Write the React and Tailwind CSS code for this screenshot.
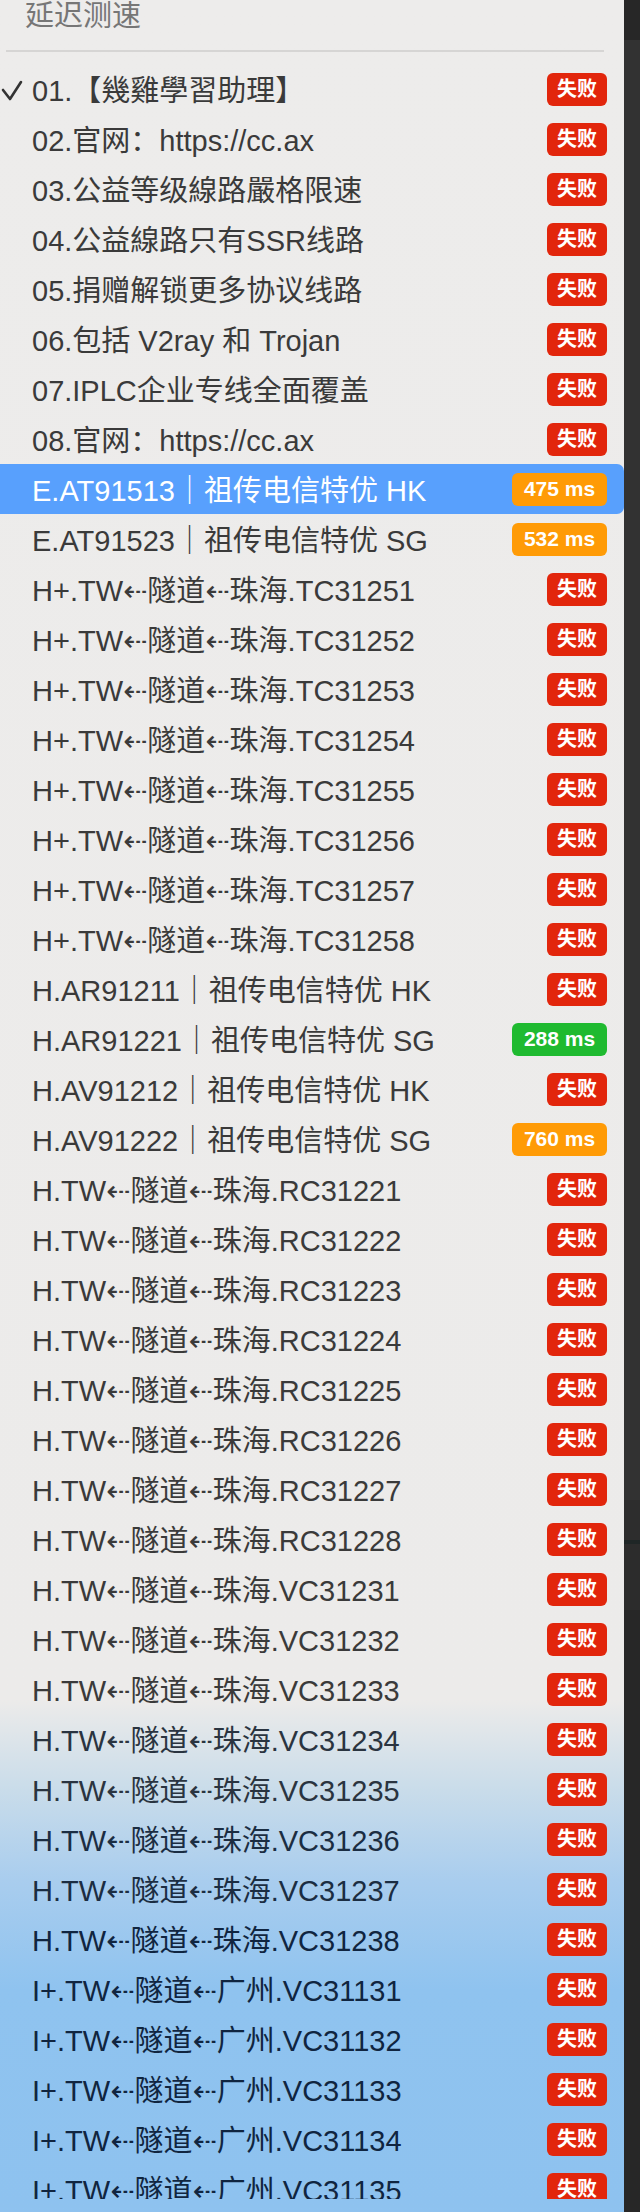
import React from "react";

const FONT = {
  fontFamily: '"Liberation Sans", "Noto Sans CJK SC", "DejaVu Sans", sans-serif',
};

const badgeStyles = {
  fail: "bg-[#e2260c] w-[60px] text-[20px]",
  orange: "bg-[#ff9b06] w-[95px] text-[21px]",
  green: "bg-[#1fba30] w-[95px] text-[21px]",
};

const tunnel = (prefix, city, code) => `${prefix}.TW⇠隧道⇠${city}.${code}`;

// menu rows: label, badge text, badge kind
const rows = [
  { label: "01.【幾雞學習助理】", checked: true },
  { label: "02.官网：https://cc.ax" },
  { label: "03.公益等级線路嚴格限速" },
  { label: "04.公益線路只有SSR线路" },
  { label: "05.捐赠解锁更多协议线路" },
  { label: "06.包括 V2ray 和 Trojan" },
  { label: "07.IPLC企业专线全面覆盖" },
  { label: "08.官网：https://cc.ax" },
  { label: "E.AT91513｜祖传电信特优 HK", badge: "475 ms", kind: "orange", active: true },
  { label: "E.AT91523｜祖传电信特优 SG", badge: "532 ms", kind: "orange" },
  ...[1, 2, 3, 4, 5, 6, 7, 8].map((n) => ({ label: tunnel("H+", "珠海", `TC3125${n}`) })),
  { label: "H.AR91211｜祖传电信特优 HK" },
  { label: "H.AR91221｜祖传电信特优 SG", badge: "288 ms", kind: "green" },
  { label: "H.AV91212｜祖传电信特优 HK" },
  { label: "H.AV91222｜祖传电信特优 SG", badge: "760 ms", kind: "orange" },
  ...[1, 2, 3, 4, 5, 6, 7, 8].map((n) => ({ label: tunnel("H", "珠海", `RC3122${n}`) })),
  ...[1, 2, 3, 4, 5, 6, 7, 8].map((n) => ({ label: tunnel("H", "珠海", `VC3123${n}`) })),
  ...[1, 2, 3, 4, 5].map((n) => ({ label: tunnel("I+", "广州", `VC3113${n}`) })),
];

const textColor = (i) => {
  if (i >= 37) return "text-[#102540]";
  if (i >= 35) return "text-[#1b2d42]";
  if (i >= 33) return "text-[#2a3440]";
  return "text-[#3a3a3a]";
};

const Check = () => (
  <svg width="22" height="22" viewBox="0 0 22 22" className="ml-[1px] mt-[3px]">
    <polyline
      points="2,10 9,19 20,2"
      fill="none"
      stroke="#333"
      strokeWidth="2.6"
      strokeLinecap="round"
      strokeLinejoin="round"
    />
  </svg>
);

const Row = ({ row, index }) => {
  const kind = row.kind || "fail";
  return (
    <div
      className={`flex h-[50px] shrink-0 items-center pr-[17px] ${
        row.active ? "rounded-r-[7px] bg-[#58a0fd] text-white" : textColor(index)
      }`}
    >
      <div className="flex w-[32px] shrink-0 items-center">{row.checked && <Check />}</div>
      <span className="flex-1 whitespace-nowrap pt-[4px] text-[29px] leading-none">
        {row.label}
      </span>
      <span
        className={`flex h-[33px] shrink-0 items-center justify-center rounded-[6px] font-bold text-white ${badgeStyles[kind]}`}
      >
        {row.badge || "失败"}
      </span>
    </div>
  );
};

export default function App() {
  return (
    <div className="flex h-[2212px] w-[640px] overflow-hidden" style={FONT}>
      {/* Menu */}
      <div className="flex w-[624px] flex-col bg-[linear-gradient(to_bottom,#edeceb_0px,#ecebea_1700px,#c9dcea_1790px,#a9cdee_1880px,#8fc3ef_1990px,#8ec2ef_2212px)]">
        <div className="h-[50px] shrink-0 pl-[25px] pt-[2px] text-[29px] leading-[28px] text-[#767676]">
          延迟测速
        </div>
        <div className="ml-[6px] h-[2px] w-[598px] shrink-0 bg-[#d6d5d4]" />
        <div className="mt-[12px] flex h-[2135px] shrink-0 flex-col overflow-hidden">
          {rows.map((row, i) => (
            <Row key={i} row={row} index={i} />
          ))}
        </div>
      </div>

      {/* Window behind */}
      <div className="flex w-[16px] flex-col">
        <div className="h-[40px] bg-[#272727]" />
        <div className="h-[1460px] bg-[#323232]" />
        <div className="h-[40px] bg-[#2d2d2d]" />
        <div className="h-[4px] bg-[#1f2626]" />
        <div className="h-[66px] bg-[#2c2c2c]" />
        <div className="flex-1 bg-[#272727]" />
      </div>
    </div>
  );
}
